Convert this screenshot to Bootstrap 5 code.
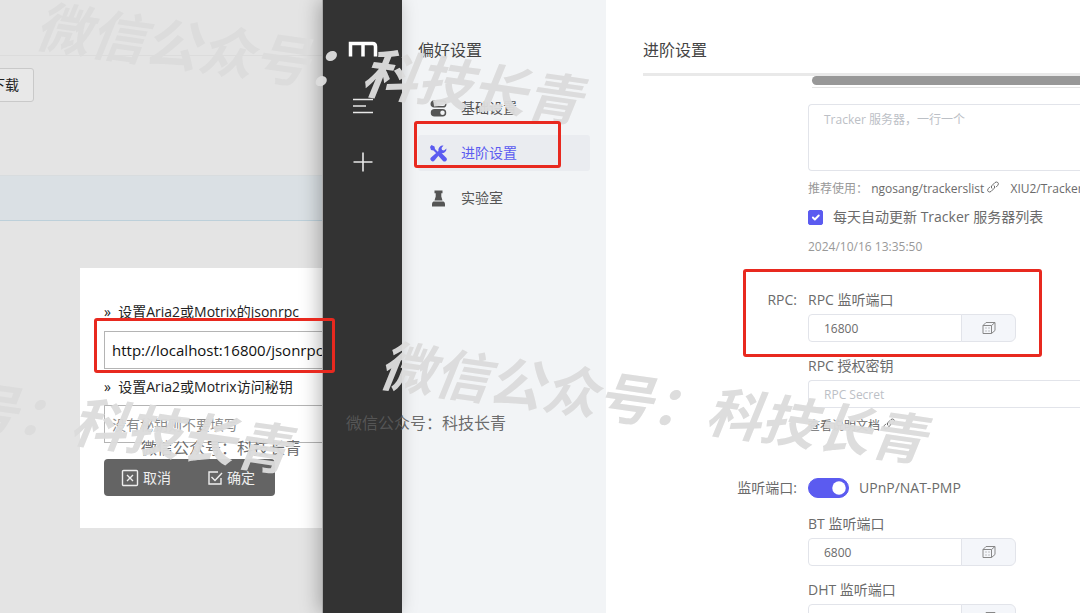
<!DOCTYPE html>
<html lang="zh-CN">
<head>
<meta charset="utf-8">
<meta name="viewport" content="width=device-width, initial-scale=1">
<title>进阶设置</title>
<link href="https://cdn.jsdelivr.net/npm/bootstrap@5.3.0/dist/css/bootstrap.min.css" rel="stylesheet">
<style>
  body { font-family: "Open Sans", "Noto Sans CJK SC", sans-serif; font-size: 14px; line-height: 24px; color: #6b6b6b; background: #fff; }
  .shell { height: 100vh; }

  /* browser page behind the app */
  .web-pane { flex: 0 0 323px; background: #e4e4e4; color: #222; }
  .web-top { height: 56px; border-bottom: 1px solid #dcdcdc; }
  .web-tools { height: 119px; padding-top: 12px; }
  .btn-down { margin-left: -24px; padding: 0 14px; height: 34px; font-size: 14px; line-height: 30px; background: #e8e8e8; border: 1px solid #c9c9c9; border-radius: 3px; color: #222; }
  .web-band { height: 46px; background: #dae0e4; border-bottom: 1px solid #bdd0da; border-top: 1px solid #d8dcde; }
  .dialog-box { margin: 47px 0 0 80px; padding: 32px 0 32px 24px; background: #fff; }
  .dialog-box label { display: block; font-size: 14px; }
  .dialog-box input { display: block; width: 100%; height: 38px; border: 1px solid #b4b4b4; border-right: 0; padding: 0 0 0 7px; background: #fff; border-radius: 0; }
  .url-row { margin: 7px 0 6px; }
  .rpc-url { font-size: 15px; color: #111; }
  .rpc-key { font-size: 14px; margin-top: 6px; }
  .rpc-key::placeholder { color: #8a8a8a; }
  .dialog-actions { width: 171px; height: 37px; background: #646464; border-radius: 4px; gap: 36px; padding-left: 17px; }
  .dialog-actions .btn { color: #eee; font-size: 14px; line-height: 24px; padding: 0; border: 0; gap: 4px; }

  /* app window */
  .rail { flex: 0 0 79px; background: #333; box-shadow: -1px 0 0 #aaa, -4px 0 18px rgba(0,0,0,.28); z-index: 1; padding-top: 38px; gap: 38px; }
  .rail .btn { padding: 0; border: 0; line-height: 0; color: #e8e8e8; }
  .side { flex: 0 0 204px; background: #f2f4f6; padding: 38px 16px 0; }
  .side .nav { margin-top: 28px; gap: 9px; }
  .pane-title { font-size: 16px; line-height: 24px; font-weight: 400; color: #444; margin: 0; }
  .side .nav-link { display: flex; align-items: center; gap: 14px; height: 36px; padding: 0 12px; color: #555; font-size: 14px; border-radius: 3px; }
  .side .nav-link.active { background: #eaecf0; color: #5b5bf0; }
  .main-pane { min-width: 0; padding-left: 37px; padding-top: 38px; }
  .title-bar { height: 38px; border-bottom: 3px solid #e9e9e9; }
  .form-key { flex: 0 0 165px; padding-right: 11px; text-align: right; }
  .form-body { min-width: 0; white-space: nowrap; }
  .port-label { display: block; margin-bottom: 2px; }
  .next-label { margin-top: 12px; }
  .list-tail { height: 12px; margin-left: 4px; border-bottom: 1px solid #e4e4e4; }
  .list-tail div { height: 9px; background: #989898; border-radius: 5px 0 0 5px; }
  .field { font-size: 12px; border: 1px solid #e2e4ea; border-radius: 4px; color: #6b6b6b; padding: 0 15px; }
  .field::placeholder { color: #bcc0c6; }
  input.field { height: 28px; min-height: 0; line-height: 24px; }
  textarea.field { height: 67px; padding: 3px 15px; line-height: 24px; resize: none; border-right: 0; border-radius: 4px 0 0 4px; }
  .wide { border-right: 0; border-radius: 4px 0 0 4px; }
  .note { font-size: 12px; color: #999; margin-top: 6px; }
  .note a { color: #6b6b6b; text-decoration: none; }
  .note svg { vertical-align: 0; }
  .check-row { gap: 10px; }
  .rpc-group { padding-top: 29px; }
  .listen-group { margin-top: 38px; }
  .port { width: 208px; height: 28px; }
  .port .btn { width: 55px; padding: 0; line-height: 0; background: #f4f6fa; border: 1px solid #e2e4ea; color: #888; }
  .tick { width: 15px !important; height: 15px !important; border-radius: 2px !important; margin: 0 !important; }
  .form-check-input:checked { background-color: #5b5bf0; border-color: #5b5bf0; }
  .toggle { width: 41px !important; height: 20px; margin: 0 !important; }

  /* annotations and watermarks lie over everything */
  .red-box { position: absolute; border: 3px solid #e8291f; border-radius: 3px; z-index: 4; pointer-events: none; }
  .marks { position: absolute; inset: 0; overflow: hidden; z-index: 3; pointer-events: none; }
  .mark-big, .mark-small { position: absolute; white-space: nowrap; }
  .mark-big { font: italic 700 55px/60px "Noto Sans CJK SC", sans-serif; width: 550px; color: #dcdcdc; opacity: .96; transform: rotate(8deg); }
  .mark-small { font: 16px/24px "Noto Sans CJK SC", sans-serif; color: rgba(90,90,90,.9); z-index: 2; }
</style>
</head>
<body>
<div class="shell d-flex position-relative overflow-hidden">

  <section class="web-pane">
    <div class="web-top"></div>
    <div class="web-tools"><button type="button" class="btn btn-down">下载</button></div>
    <div class="web-band"></div>
    <form class="dialog-box">
      <label for="rpcUrl">»&nbsp; 设置Aria2或Motrix的jsonrpc</label>
      <div class="url-row position-relative">
        <input id="rpcUrl" class="rpc-url" type="text" value="http://localhost:16800/jsonrpc">
        <div class="red-box" style="left:-10px;top:-13px;right:-12px;bottom:-4px"></div>
      </div>
      <label for="rpcKey">»&nbsp; 设置Aria2或Motrix访问秘钥</label>
      <input id="rpcKey" class="rpc-key" type="text" placeholder="没有秘钥则不要填写">
      <div class="dialog-actions d-flex align-items-center mt-3">
        <button type="button" class="btn d-flex align-items-center"><svg width="18" height="18" viewBox="0 0 18 18" fill="none" stroke="currentColor" stroke-width="1.4"><rect x="1.5" y="1.5" width="15" height="15" rx="1"/><path d="M6 6l6 6M12 6l-6 6"/></svg>取消</button>
        <button type="button" class="btn d-flex align-items-center"><svg width="16" height="16" viewBox="0 0 16 16" fill="none" stroke="currentColor" stroke-width="1.4"><path d="M11 2H2v12h12V8M4.500 7l3.500 3.500L15 3"/></svg>确定</button>
      </div>
    </form>
  </section>

  <nav class="rail position-relative d-flex flex-column align-items-center">
    <button type="button" class="btn" aria-label="Motrix"><svg width="30" height="22" viewBox="0 0 30 22" fill="none" stroke="#fff" stroke-width="3.500"><path d="M2.500 18.500V5.500h22q3 0 3 3v10M15 5.500v13"/></svg></button>
    <button type="button" class="btn" aria-label="任务列表"><svg width="22" height="16" viewBox="0 0 22 16" stroke="currentColor" stroke-width="1.600"><path d="M1 1.500h20M1 8h13M1 14.500h20"/></svg></button>
    <button type="button" class="btn" aria-label="新建任务"><svg width="20" height="20" viewBox="0 0 20 20" stroke="currentColor" stroke-width="1.600"><path d="M10 .5v19M.5 10h19"/></svg></button>
  </nav>

  <aside class="side">
    <h2 class="pane-title">偏好设置</h2>
    <ul class="nav flex-column">
      <li><a class="nav-link" href="#"><svg width="17" height="17" viewBox="0 0 17 17" fill="currentColor"><path fill-rule="evenodd" d="M4.500 9H12.500a3.700 3.700 0 010 7.500H4.500a3.700 3.700 0 010-7.500zM12.500 10.500a2.200 2.200 0 100 4.500 2.200 2.200 0 000-4.500z"/><rect x="1.200" y="1" width="14.600" height="5.800" rx="2.900" fill="none" stroke="currentColor" stroke-width="1.400"/><circle cx="4.200" cy="3.900" r="2.600"/></svg>基础设置</a></li>
      <li class="position-relative"><a class="nav-link active" href="#"><svg width="17" height="17" viewBox="0 0 17 17" fill="currentColor"><path d="M1.500 0L4.500 1.500 5 4l3 3-1.500 1.500-3-3L1 5 0 2zM9.500 8.500l2-.5 5 5q1 2-.5 3t-3 0L8.500 11zM16.500 3.500A4.500 4.500 0 0110.700 8L4.500 15.500A2.200 2.200 0 011 12.500L8.500 6A4.500 4.500 0 0113.500.5L11.500 3l.5 2 2 .5z"/></svg>进阶设置</a>
        <div class="red-box" style="left:-4px;top:-14px;right:29px;bottom:3px"></div></li>
      <li><a class="nav-link" href="#"><svg width="17" height="17" viewBox="0 0 17 17" fill="currentColor"><path d="M4.500.5h8v2.700h-1.200V6.500l1.200 4h-8l1.200-4V3.200H4.500zM3.500 11.500h10q1.500.5 1.500 2.500v2.500H2V14q0-2 1.500-2.500z"/></svg>实验室</a></li>
    </ul>
  </aside>

  <main class="main-pane flex-grow-1">
    <div class="title-bar"><h1 class="pane-title">进阶设置</h1></div>
    <form>
      <div class="d-flex">
        <div class="form-key"></div>
        <div class="form-body flex-grow-1">
          <div class="list-tail"><div></div></div>
          <textarea class="form-control field mt-3 d-block" aria-label="Tracker 服务器" placeholder="Tracker 服务器，一行一个"></textarea>
          <div class="note">推荐使用： <a href="#">ngosang/trackerslist <svg width="12" height="12" viewBox="0 0 12 12" fill="none" stroke="currentColor"><path d="M5 7.500Q3.500 6 5 4.500L8 1.500q1.500-1 2.800 0t0 2.800L9 6.200M7 4.500Q8.500 6 7 7.500L4 10.500q-1.500 1-2.800 0t0-2.800L3 5.800"/></svg></a> <a class="ms-2" href="#">XIU2/TrackersListCollection</a></div>
          <div class="check-row form-check d-flex align-items-center p-0 m-0 mt-1">
            <input class="form-check-input tick float-none" type="checkbox" id="autoSync" checked><label for="autoSync">每天自动更新 Tracker 服务器列表</label>
          </div>
          <div class="note">2024/10/16 13:35:50</div>
        </div>
      </div>

      <div class="rpc-group d-flex position-relative">
        <div class="form-key">RPC:</div>
        <div class="form-body flex-grow-1">
          <label class="port-label" for="rpcPort">RPC 监听端口</label>
          <div class="input-group port">
            <input id="rpcPort" class="form-control field" type="text" value="16800"><button type="button" class="btn" aria-label="随机端口"><svg width="14" height="14" viewBox="0 0 14 14" fill="none" stroke="currentColor"><path d="M1 4.500h8.500v8H1zM1 4.500l3-3h9l-3.500 3M13 1.500V9.500l-3.500 3"/><path d="M3.500 7h1M6.500 7h1M3.500 10h1M6.500 10h1"/></svg></button>
          </div>
        </div>
        <div class="red-box" style="left:100px;top:10px;width:299px;bottom:-15px"></div>
      </div>

      <div class="d-flex">
        <div class="form-key"></div>
        <div class="form-body flex-grow-1">
          <label class="port-label next-label" for="rpcSecret">RPC 授权密钥</label>
          <input id="rpcSecret" class="form-control field wide" type="text" placeholder="RPC Secret">
          <div class="note"><a href="#">查看说明文档 <svg width="12" height="12" viewBox="0 0 12 12" fill="none" stroke="currentColor"><path d="M5 7.500Q3.500 6 5 4.500L8 1.500q1.500-1 2.800 0t0 2.800L9 6.200M7 4.500Q8.500 6 7 7.500L4 10.500q-1.500 1-2.800 0t0-2.800L3 5.800"/></svg></a></div>
        </div>
      </div>

      <div class="listen-group d-flex">
        <div class="form-key">监听端口:</div>
        <div class="form-body flex-grow-1">
          <div class="check-row form-check form-switch d-flex align-items-center p-0 m-0">
            <input class="form-check-input toggle float-none" type="checkbox" role="switch" id="upnp" checked><label for="upnp">UPnP/NAT-PMP</label>
          </div>
          <label class="port-label next-label" for="btPort">BT 监听端口</label>
          <div class="input-group port">
            <input id="btPort" class="form-control field" type="text" value="6800"><button type="button" class="btn" aria-label="随机端口"><svg width="14" height="14" viewBox="0 0 14 14" fill="none" stroke="currentColor"><path d="M1 4.500h8.500v8H1zM1 4.500l3-3h9l-3.500 3M13 1.500V9.500l-3.500 3"/><path d="M3.500 7h1M6.500 7h1M3.500 10h1M6.500 10h1"/></svg></button>
          </div>
          <label class="port-label next-label" for="dhtPort">DHT 监听端口</label>
          <div class="input-group port">
            <input id="dhtPort" class="form-control field" type="text" value="6800"><button type="button" class="btn" aria-label="随机端口"><svg width="14" height="14" viewBox="0 0 14 14" fill="none" stroke="currentColor"><path d="M1 4.500h8.500v8H1zM1 4.500l3-3h9l-3.500 3M13 1.500V9.500l-3.500 3"/><path d="M3.500 7h1M6.500 7h1M3.500 10h1M6.500 10h1"/></svg></button>
          </div>
        </div>
      </div>
    </form>
  </main>

  <div class="mark-small" style="left:346px;top:410px">微信公众号：科技长青</div>
  <div class="mark-small" style="left:141px;top:435px">微信公众号：科技长青</div>
  <div class="marks" aria-hidden="true">
    <div class="mark-big" style="left:34px;top:30px">微信公众号：科技长青</div>
    <div class="mark-big" style="left:378px;top:369px">微信公众号：科技长青</div>
    <div class="mark-big" style="left:-257px;top:379px">微信公众号：科技长青</div>
  </div>
</div>
<script src="https://cdn.jsdelivr.net/npm/bootstrap@5.3.0/dist/js/bootstrap.bundle.min.js"></script>
</body>
</html>
